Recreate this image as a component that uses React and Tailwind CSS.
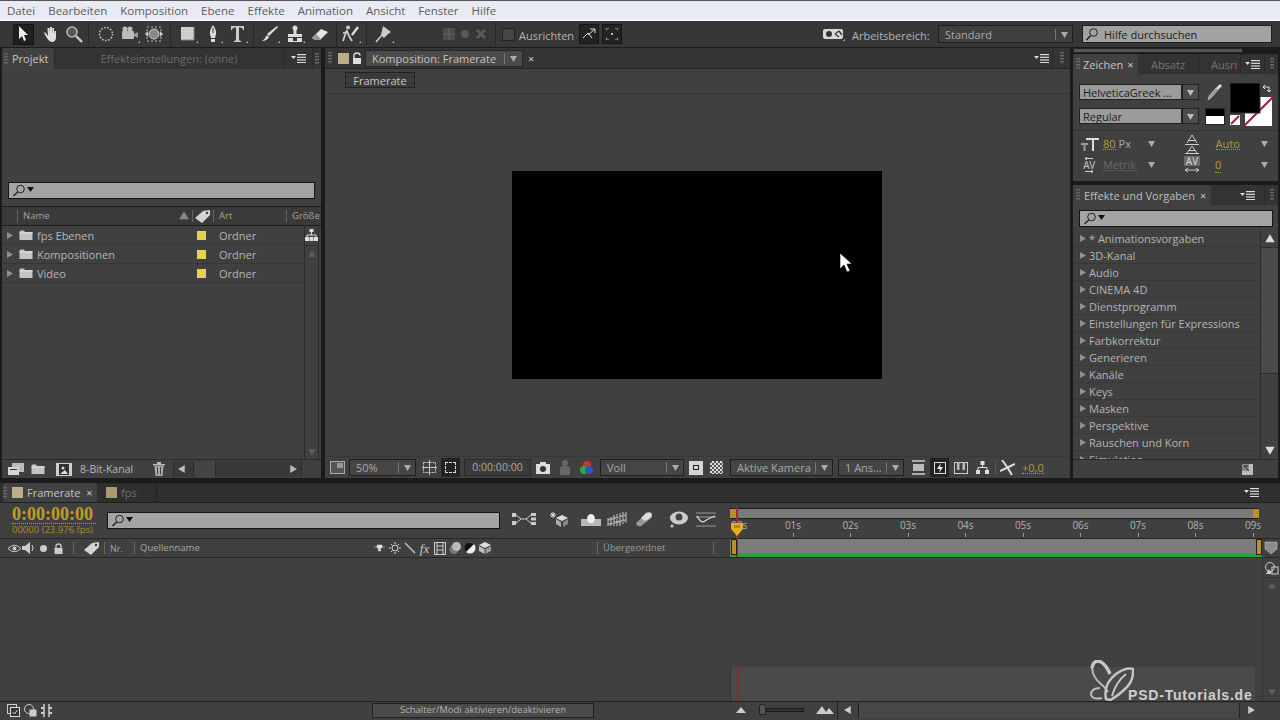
import React from "react";

const Tri = ({ d = "r", c = "#8f8f8f", s = 9, className = "" }) => {
  const p = { r: "2,1 8,4.5 2,8", l: "7,1 1,4.5 7,8", u: "1,7 4.5,1 8,7", d: "1,2 8,2 4.5,8" }[d];
  return <svg width={s} height={s} viewBox="0 0 9 9" className={"shrink-0 " + className}><polygon points={p} fill={c} /></svg>;
};
const Grip = ({ className = "" }) => (
  <svg width="4" height="12" viewBox="0 0 4 12" className={"shrink-0 " + className}>
    {[0, 3, 6, 9].map((y) => <rect key={y} x="0" y={y} width="4" height="1.5" fill="#666" />)}
  </svg>
);
const Menu = ({ className = "" }) => (
  <svg width="15" height="9" viewBox="0 0 15 9" className={"shrink-0 " + className}>
    <polygon points="0,2 5,2 2.5,5" fill="#ddd" />
    {[0, 2.7, 5.4, 8].map((y) => <rect key={y} x="6" y={y} width="9" height="1.2" fill="#ddd" />)}
  </svg>
);
const X = ({ className = "" }) => <span className={"text-[11px] leading-none text-[#ccc] " + className}>×</span>;
const Mark = () => <polygon points="18,19 20,19 20,17" fill="#bbb" />;
const Ic = ({ w = 20, h = 20, className = "", children }) => (
  <svg width={w} height={h} viewBox={`0 0 ${w} ${h}`} className={"shrink-0 " + className}>{children}</svg>
);
const Search = () => (
  <svg width="24" height="13" viewBox="0 0 24 13" className="shrink-0">
    <circle cx="8.5" cy="5" r="3.8" fill="none" stroke="#222" strokeWidth="1" />
    <line x1="5.7" y1="8" x2="1.5" y2="12" stroke="#222" strokeWidth="1.4" />
    <polygon points="15,3 22,3 18.5,8" fill="#111" />
  </svg>
);
const Folder = () => (
  <svg width="14" height="11" viewBox="0 0 14 11" className="shrink-0">
    <path d="M0.5 1.5 L0.5 10 L13.5 10 L13.5 2 L6 2 L5 0.5 L1.5 0.5 Z" fill="#c4c4c4" />
    <rect x="0.5" y="2.5" width="13" height="1" fill="#e2e2e2" />
  </svg>
);
const Tag = ({ className = "" }) => (
  <svg width="18" height="15" viewBox="0 0 18 15" className={"shrink-0 " + className}>
    <polygon points="1,9 9,2 16,1 16,6 8,14" fill="#d4d4d4" />
    <circle cx="13" cy="4" r="1.2" fill="#3a3a3a" />
  </svg>
);
const VLine = ({ className = "" }) => <div className={"w-px h-[12px] bg-[#666] shrink-0 " + className} />;

const Select = ({ label, className = "", txt = "text-[#a8a8a8]" }) => (
  <div className={"flex items-center h-[17px] border border-[#1f1f1f] bg-[#454545] shrink-0 " + className}>
    <span className={"flex-1 pl-[6px] text-[11px] leading-[15px] whitespace-nowrap " + txt}>{label}</span>
    <div className="w-px h-[11px] bg-[#777]" />
    <div className="w-[16px] flex justify-center"><Tri d="d" c="#aaa" /></div>
  </div>
);

function Toolbar() {
  return (
    <div className="h-[26px] shrink-0 bg-[#373737] flex items-center relative">
      <div className="w-[89px] h-[24px] flex items-center gap-[5px] pl-[13px] border-r border-[#262626] shrink-0">
        <div className="w-[21px] h-[21px] bg-[#202020] border border-[#151515] flex items-center justify-center shrink-0">
          <svg width="11" height="16" viewBox="0 0 11 16"><polygon points="1,0 1,13 4,10 6,15 8,14 6,9 10,9" fill="#eee" /></svg>
        </div>
        <Ic><path d="M5 9 L8 14 Q10 18 14 18 Q17 17 17 13 L17 7 L15.500 7 L15 11 L15 4 L13.500 4 L13 10 L13 3 L11 3 L11 10 L10.500 4 L8.500 4 L9 12 L6 8 Z" fill="#e0e0e0" /></Ic>
        <Ic><circle cx="8" cy="8" r="5" fill="#555" stroke="#bbb" strokeWidth="1.5" /><line x1="12" y1="12" x2="18" y2="18" stroke="#ccc" strokeWidth="2.4" /></Ic>
      </div>
      <div className="w-[82px] h-[24px] flex items-center gap-[4px] pl-[7px] border-r border-[#262626] shrink-0">
        <Ic><circle cx="10" cy="10" r="6.500" fill="none" stroke="#bbb" strokeWidth="1.600" strokeDasharray="1.600 1.500" /></Ic>
        <Ic><rect x="2" y="7" width="12" height="8" rx="1" fill="#bbb" /><circle cx="5" cy="5" r="2.500" fill="#bbb" /><circle cx="10" cy="5" r="2.500" fill="#bbb" /><polygon points="14,10 18,8 18,14 14,12" fill="#999" /><Mark /></Ic>
        <Ic><rect x="3" y="3" width="14" height="14" fill="none" stroke="#bbb" strokeDasharray="2 2" /><circle cx="10" cy="10" r="5" fill="#888" stroke="#ccc" /><polygon points="1,10 4,7 4,13" fill="#ccc" /><polygon points="19,10 16,7 16,13" fill="#ccc" /></Ic>
      </div>
      <div className="w-[83px] h-[24px] flex items-center gap-[5px] pl-[7px] border-r border-[#262626] shrink-0">
        <Ic><rect x="3" y="3" width="13" height="13" fill="#cfcfcf" /><path d="M3 16 H16 V3" fill="none" stroke="#888" /><Mark /></Ic>
        <Ic><path d="M10 1 Q14 7 13 10 L12 14 H8 L7 10 Q6 7 10 1 Z" fill="#ddd" /><rect x="8" y="15" width="4" height="3" fill="#ddd" /><line x1="10" y1="4" x2="10" y2="9" stroke="#333" /><Mark /></Ic>
        <Ic><path d="M3 2 H16 V6 H15 Q15 3.500 12 3.500 H11 V15 Q11 17 13 17 V18 H6 V17 Q8 17 8 15 V3.500 H7 Q4 3.500 4 6 H3 Z" fill="#ccc" /><Mark /></Ic>
      </div>
      <div className="w-[83px] h-[24px] flex items-center gap-[5px] pl-[6px] border-r border-[#262626] shrink-0">
        <Ic><path d="M17 2 L18 3 L9 12 L7 10 Z" fill="#ddd" /><path d="M7 11 L9 13 Q7 17 2 17 Q5 15 7 11 Z" fill="#ddd" /><Mark /></Ic>
        <Ic><circle cx="10" cy="4" r="2.500" fill="#ddd" /><rect x="8.500" y="6" width="3" height="5" fill="#ddd" /><rect x="3" y="10" width="14" height="3" fill="#ddd" /><rect x="3" y="14" width="14" height="4" fill="#ddd" /><rect x="8" y="14" width="4" height="3" fill="#333" /><Mark /></Ic>
        <Ic><polygon points="2,14 11,5 18,8 10,16 5,16" fill="#e4e4e4" /><polygon points="2,14 6,10 11,15 10,16 5,16" fill="#999" /></Ic>
      </div>
      <div className="w-[30px] h-[24px] flex items-center pl-[4px] border-r border-[#262626] shrink-0">
        <Ic><circle cx="7" cy="3.500" r="2" fill="#ccc" /><path d="M6 6 L4 11 L2 17 M6 7 L8 12 L11 17 M6 8 L2 9" stroke="#ccc" strokeWidth="1.800" fill="none" /><path d="M17 3 L11 11" stroke="#ddd" strokeWidth="2.400" /><Mark /></Ic>
      </div>
      <div className="w-[129px] h-[24px] flex items-center pl-[7px] border-r border-[#262626] shrink-0">
        <Ic><polygon points="9,2 17,8 14,10 10,14 7,11" fill="#ccc" /><line x1="8" y1="11" x2="2" y2="18" stroke="#ccc" strokeWidth="1.500" /><Mark /></Ic>
        <Ic w={16} h={16} className="ml-[47px]"><rect x="2" y="2" width="12" height="12" fill="#4c4c4c" /><path d="M8 2 V14 M2 8 H14" stroke="#666" /></Ic>
        <Ic w={14} h={14} className="ml-[1px]"><circle cx="7" cy="7" r="4" fill="#5a5a5a" /></Ic>
        <Ic w={14} h={14} className="ml-[2px]"><path d="M3 3 L11 11 M11 3 L3 11" stroke="#5c5c5c" strokeWidth="2.500" /></Ic>
      </div>
      <div className="w-[13px] h-[13px] border border-[#222] bg-[#454545] ml-[6px] shrink-0" />
      <span className="ml-[4px] mt-[2px] w-[55px] text-[11px] leading-none text-[#b4b4b4] whitespace-nowrap">Ausrichten</span>
      <div className="ml-[5px] w-[20px] h-[20px] bg-[#232323] border border-[#161616] flex items-center justify-center shrink-0">
        <svg width="14" height="14" viewBox="0 0 14 14"><path d="M1 11 L6 6 L10 11 M8 2 L13 2 M13 2 L13 6 M6 8 L13 2" stroke="#ddd" fill="none" /></svg>
      </div>
      <div className="ml-[3px] w-[20px] h-[20px] bg-[#232323] border border-[#161616] flex items-center justify-center shrink-0">
        <svg width="12" height="12" viewBox="0 0 12 12"><path d="M0 3 V0 H3 M9 0 H12 V3 M12 9 V12 H9 M3 12 H0 V9" stroke="#bbb" fill="none" /><rect x="5" y="5" width="2" height="2" fill="#bbb" /></svg>
      </div>
      <div className="flex-1" />
      <svg width="24" height="15" viewBox="0 0 24 15" className="shrink-0">
        <rect x="1" y="2" width="20" height="10" rx="2" fill="#d8d8d8" />
        <circle cx="7" cy="7" r="3" fill="#333" /><path d="M13 7 L17 4 M17 4 L20 8 M13 7 L17 10" stroke="#333" strokeWidth="1.300" fill="none" />
        <polygon points="21,14 23,14 23,12" fill="#bbb" />
      </svg>
      <span className="ml-[6px] mt-[2px] text-[11px] leading-none text-[#b4b4b4] whitespace-nowrap w-[86px]">Arbeitsbereich:</span>
      <Select label="Standard" className="w-[135px] !h-[18px] !bg-[#3f3f3f]" />
      <div className="ml-[9px] mr-[8px] w-[190px] h-[18px] border border-[#1c1c1c] bg-[#a2a2a2] flex items-center shrink-0">
        <svg width="14" height="14" viewBox="0 0 14 14" className="ml-[2px]"><circle cx="8.500" cy="5.500" r="3.800" fill="none" stroke="#222" /><line x1="5.700" y1="8.500" x2="1.500" y2="13" stroke="#222" strokeWidth="1.400" /></svg>
        <span className="ml-[5px] text-[11px] leading-none text-[#1d1d1d]">Hilfe durchsuchen</span>
      </div>
    </div>
  );
}

function ProjectPanel() {
  const rows = ["fps Ebenen", "Kompositionen", "Video"];
  return (
    <div className="w-[319px] ml-[2px] mr-[4px] shrink-0 flex flex-col">
      <div className="h-[21px] flex items-stretch shrink-0 bg-[#2a2a2a]">
        <div className="w-[52px] bg-[#414141] flex items-center pl-[2px] shrink-0 rounded-t-[2px]">
          <Grip /><span className="ml-[4px] text-[11px] leading-none text-[#c4c4c4]">Projekt</span><X className="ml-[6px]" />
        </div>
        <div className="w-[228px] ml-[1px] bg-[#333] flex items-center justify-center text-[11px] leading-none text-[#6d6d6d] shrink-0">Effekteinstellungen: (ohne)</div>
        <div className="w-[29px] bg-[#333] border-l border-[#2a2a2a] flex items-center justify-center"><Menu /></div>
        <div className="flex-1 flex items-center justify-center bg-[#333] border-l border-[#2a2a2a]"><Grip /></div>
      </div>
      <div className="flex-1 min-h-0 bg-[#404040] flex flex-col">
        <div className="h-[130px] shrink-0 flex flex-col justify-end px-[6px]">
          <div className="h-[17px] border border-[#141414] bg-[#a4a4a4] flex items-center pl-[3px]"><Search /></div>
        </div>
        <div className="h-[8px] shrink-0 border-b border-[#1c1c1c]" />
        <div className="h-[19px] shrink-0 bg-[#3a3a3a] border-b border-[#1c1c1c] flex items-center text-[9.500px] leading-none text-[#a4a4a4]">
          <VLine className="ml-[15px]" /><span className="ml-[5px] w-[155px]">Name</span>
          <Tri d="u" c="#888" s={12} /><VLine className="ml-[2px]" /><Tag className="ml-[1px]" /><VLine className="ml-[1px]" />
          <span className="ml-[5px] w-[67px]">Art</span><VLine /><span className="ml-[5px]">Größe</span>
        </div>
        <div className="flex-1 min-h-0 flex">
          <div className="w-[302px] shrink-0">
            {rows.map((r) => (
              <div key={r} className="h-[19px] border-b border-[#363636] flex items-center text-[11px] leading-none text-[#b5b5b5]">
                <Tri className="ml-[3px]" /><div className="ml-[5px] flex"><Folder /></div>
                <span className="ml-[4px] w-[160px] shrink-0">{r}</span>
                <div className="w-[9px] h-[9px] bg-[#e3d44c] mr-[13px] shrink-0" /><span>Ordner</span>
              </div>
            ))}
          </div>
          <div className="w-[15px] border-x border-[#2c2c2c] flex flex-col items-center relative">
            <div className="h-[19px] flex items-center">
              <svg width="13" height="13" viewBox="0 0 13 13"><rect x="4.500" y="0" width="4" height="3" fill="#ddd" /><path d="M6.500 3 V6 M2 8 V6 H11 V8" stroke="#ddd" fill="none" /><rect x="0" y="8" width="4" height="4" fill="#ddd" /><rect x="4.500" y="8" width="4" height="4" fill="#ddd" /><rect x="9" y="8" width="4" height="4" fill="#ddd" /></svg>
            </div>
            <div className="w-full flex-1 border-t border-[#2c2c2c] flex flex-col items-center justify-between pt-[3px] pb-[2px]">
              <Tri d="u" c="#5d5d5d" s={10} /><Tri d="d" c="#5d5d5d" s={10} />
            </div>
          </div>
        </div>
        <div className="h-[19px] shrink-0 flex items-center border-t border-[#2c2c2c]">
          <svg width="16" height="13" viewBox="0 0 16 13" className="ml-[6px]"><rect x="4" y="0" width="12" height="9" fill="#bbb" /><rect x="0" y="4" width="11" height="8" fill="#d5d5d5" /><rect x="2" y="6" width="7" height="1" fill="#333" /></svg>
          <div className="ml-[7px] flex"><Folder /></div>
          <svg width="16" height="13" viewBox="0 0 16 13" className="ml-[11px]"><rect x="0" y="0" width="16" height="13" fill="#cfcfcf" /><rect x="3" y="1" width="10" height="11" fill="#303030" /><circle cx="7" cy="5" r="1.500" fill="#ddd" /><polygon points="4,11 9,7 12,11" fill="#ddd" /></svg>
          <span className="ml-[8px] text-[10.500px] leading-none text-[#b8b8b8] w-[71px] whitespace-nowrap">8-Bit-Kanal</span>
          <svg width="12" height="14" viewBox="0 0 12 14" className="ml-[2px]"><rect x="0" y="2" width="12" height="1.500" fill="#bbb" /><rect x="4" y="0" width="4" height="2" fill="#bbb" /><path d="M1.500 4 H10.500 L9.500 14 H2.500 Z" fill="#aaa" /><path d="M4.500 5 V12.500 M7.500 5 V12.500" stroke="#444" /></svg>
          <div className="ml-[8px] w-[129px] h-[16px] flex items-center border-x border-[#2c2c2c] bg-[#393939]">
            <Tri d="l" c="#bbb" s={10} className="ml-[3px]" />
            <div className="ml-[6px] w-[23px] h-[16px] bg-[#444] border-x border-[#2a2a2a]" />
            <div className="flex-1" /><Tri d="r" c="#bbb" s={10} className="mr-[3px]" />
          </div>
        </div>
      </div>
    </div>
  );
}

function CompPanel() {
  return (
    <div className="w-[745px] shrink-0 flex flex-col">
      <div className="h-[21px] shrink-0 bg-[#343434] flex items-center border-b border-[#262626]">
        <Grip className="ml-[3px]" />
        <div className="ml-[6px] w-[11px] h-[11px] bg-[#bcae86] shrink-0" />
        <svg width="10" height="12" viewBox="0 0 10 12" className="ml-[3px]"><path d="M2 6 V3.500 Q2 1 5 1 Q8 1 8 3.500" fill="none" stroke="#ddd" strokeWidth="1.400" /><rect x="1" y="6" width="8" height="6" fill="#ddd" /></svg>
        <div className="ml-[3px] w-[158px] h-[17px] border border-[#262626] bg-[#4a4a4a] flex items-center">
          <span className="pl-[6px] flex-1 text-[11px] leading-none text-[#c2c2c2] whitespace-nowrap">Komposition: Framerate</span>
          <div className="w-px h-[11px] bg-[#777]" /><div className="w-[17px] flex justify-center"><Tri d="d" c="#aaa" /></div>
        </div>
        <X className="ml-[5px]" />
        <div className="flex-1" />
        <Menu className="mr-[3px]" />
        <div className="h-full border-l border-[#2a2a2a] w-[18px] flex items-center justify-center"><Grip /></div>
      </div>
      <div className="flex-1 min-h-0 bg-[#404040] flex flex-col">
        <div className="h-[25px] shrink-0 border-b border-[#333] flex items-start pt-[3px] pl-[20px]">
          <div className="w-[70px] h-[16px] border border-[#222] bg-[#3a3a3a] flex items-center justify-center text-[11px] leading-none text-[#c6c6c6]">Framerate</div>
        </div>
        <div className="flex-1 min-h-0 flex items-center justify-center relative pr-[1px]">
          <div className="w-[370px] h-[208px] bg-black mt-[-1px]" />
          <svg width="14" height="20" viewBox="0 0 14 20" className="absolute left-[514px] top-[159px]"><polygon points="1,0 1,16 5,12 8,19 11,18 8,11 13,11" fill="#fff" stroke="#000" strokeWidth="0.600" /></svg>
        </div>
        <div className="h-[22px] shrink-0 flex items-center border-t border-[#383838]">
          <svg width="15" height="13" viewBox="0 0 15 13" className="ml-[5px]"><rect x="0.500" y="0.500" width="14" height="12" fill="#555" stroke="#aaa" /><rect x="7" y="2" width="6" height="5" fill="#999" /></svg>
          <Select label="50%" className="ml-[4px] w-[67px]" />
          <svg width="15" height="15" viewBox="0 0 15 15" className="ml-[6px]"><rect x="1.500" y="2.500" width="12" height="10" fill="none" stroke="#ccc" strokeDasharray="2 1" /><path d="M7.500 0 V15 M0 7.500 H15" stroke="#ccc" /></svg>
          <div className="ml-[4px] w-[19px] h-[19px] bg-[#232323] flex items-center justify-center shrink-0"><div className="w-[11px] h-[11px] border border-dashed border-[#ddd]" /></div>
          <div className="ml-[4px] w-[67px] h-[17px] border border-[#2a2a2a] bg-[#3b3b3b] text-[10.500px] leading-none text-[#a8a8a8] flex items-center justify-center shrink-0">0:00:00:00</div>
          <svg width="14" height="12" viewBox="0 0 14 12" className="ml-[5px]"><rect x="0" y="2" width="14" height="10" fill="#ddd" /><rect x="4" y="0" width="6" height="3" fill="#ddd" /><circle cx="7" cy="7" r="3" fill="#333" /></svg>
          <svg width="10" height="15" viewBox="0 0 10 15" className="ml-[10px]"><circle cx="5" cy="3" r="3" fill="#666" /><path d="M0 15 V8 Q0 6 3 6 H7 Q10 6 10 8 V15 Z" fill="#666" /></svg>
          <svg width="16" height="16" viewBox="0 0 16 16" className="ml-[9px]"><circle cx="8" cy="5" r="4" fill="#c33" /><circle cx="5" cy="10" r="4" fill="#3a3" /><circle cx="10" cy="10" r="4" fill="#35b" /></svg>
          <Select label="Voll" className="ml-[5px] w-[84px]" />
          <div className="ml-[5px] w-[14px] h-[14px] bg-[#d4d4d4] flex items-center justify-center shrink-0"><div className="w-[6px] h-[5px] border border-[#222]" /></div>
          <div className="ml-[7px] w-[13px] h-[13px] shrink-0 bg-[repeating-conic-gradient(#ddd_0_25%,#555_0_50%)] bg-[length:4px_4px]" />
          <Select label="Aktive Kamera" className="ml-[7px] w-[103px]" />
          <Select label="1 Ans..." className="ml-[5px] w-[66px]" />
          <svg width="13" height="15" viewBox="0 0 13 15" className="ml-[8px]"><path d="M0 1 H13 M0 14 H13" stroke="#ccc" strokeWidth="1.500" /><rect x="1" y="4" width="11" height="7" fill="#bbb" /></svg>
          <div className="ml-[5px] w-[19px] h-[19px] bg-[#222] flex items-center justify-center shrink-0">
            <svg width="12" height="12" viewBox="0 0 12 12"><rect x="0.500" y="0.500" width="11" height="11" fill="none" stroke="#ddd" /><polygon points="7,1 3,7 6,7 5,11 9,5 6,5" fill="#eee" /></svg>
          </div>
          <svg width="14" height="13" viewBox="0 0 14 13" className="ml-[5px]"><rect x="0.500" y="1.500" width="13" height="11" fill="none" stroke="#ccc" /><rect x="3" y="1" width="2.500" height="8" fill="#bbb" /><rect x="8.500" y="1" width="2.500" height="8" fill="#bbb" /></svg>
          <svg width="13" height="13" viewBox="0 0 13 13" className="ml-[8px]"><rect x="4.500" y="0" width="4" height="4" fill="#ddd" /><path d="M6.500 4 V6.500 M2 9 V6.500 H11 V9" stroke="#ddd" fill="none" /><rect x="0" y="9" width="4" height="4" fill="#ddd" /><rect x="9" y="9" width="4" height="4" fill="#ddd" /></svg>
          <div className="ml-[6px] w-px h-[16px] bg-[#555]" />
          <svg width="15" height="15" viewBox="0 0 15 15" className="ml-[4px]"><path d="M7.500 7.500 L2 0 M7.500 7.500 L15 4 M7.500 7.500 L12 15 M7.500 7.500 L0 11" stroke="#ddd" strokeWidth="2" /></svg>
          <span className="ml-[7px] text-[11px] leading-none text-[#b59a3a] border-b border-dotted border-[#b59a3a] whitespace-nowrap">+0,0</span>
        </div>
      </div>
    </div>
  );
}

const Field = ({ children, className = "" }) => <span className={"text-[11px] leading-none border-b border-dotted " + className}>{children}</span>;

function RightPanels() {
  const fx = ["* Animationsvorgaben", "3D-Kanal", "Audio", "CINEMA 4D", "Dienstprogramm", "Einstellungen für Expressions", "Farbkorrektur", "Generieren", "Kanäle", "Keys", "Masken", "Perspektive", "Rauschen und Korn", "Simulation"];
  return (
    <div className="w-[205px] ml-[3px] shrink-0 flex flex-col">
      <div className="h-[5px] w-[170px] bg-[#555] border border-[#222] shrink-0" />
      <div className="h-[20px] shrink-0 flex items-stretch mt-[1px] bg-[#333]">
        <div className="w-[65px] bg-[#414141] flex items-center pl-[3px] rounded-t-[2px] shrink-0">
          <Grip /><span className="ml-[3px] text-[11px] leading-none text-[#c4c4c4]">Zeichen</span><X className="ml-[4px]" />
        </div>
        <div className="w-[61px] border-r border-[#262626] flex items-center justify-center text-[11px] leading-none text-[#757575] shrink-0">Absatz</div>
        <div className="w-[41px] flex items-center pl-[12px] text-[11px] leading-none text-[#757575] overflow-hidden shrink-0">Ausri</div>
        <div className="w-[24px] flex items-center justify-center border-l border-[#2a2a2a]"><Menu /></div>
        <div className="flex-1 flex items-center justify-center border-l border-[#2a2a2a]"><Grip /></div>
      </div>
      <div className="h-[107px] shrink-0 bg-[#404040] flex flex-col relative">
        <div className="h-[57px] shrink-0 border-b border-[#333] pt-[9px] pl-[6px] relative">
          <div className="flex items-center">
            <div className="w-[103px] h-[16px] border border-[#222] bg-[#9b9b9b] text-[11px] leading-none text-[#1e1e1e] flex items-center pl-[3px] whitespace-nowrap">HelveticaGreek ...</div>
            <div className="w-[17px] h-[16px] border border-[#222] bg-[#4c4c4c] flex items-center justify-center"><Tri d="d" c="#bbb" /></div>
            <svg width="16" height="18" viewBox="0 0 16 18" className="ml-[8px]"><path d="M13 1 L15 3 L11 7 L9 5 Z" fill="#ddd" /><path d="M9 5 L11 7 L4 15 L1 17 L2 13 Z" fill="#999" stroke="#ddd" strokeWidth="0.500" /></svg>
          </div>
          <div className="flex items-center mt-[7px]">
            <div className="w-[103px] h-[16px] border border-[#222] bg-[#9b9b9b] text-[11px] leading-none text-[#1e1e1e] flex items-center pl-[3px]">Regular</div>
            <div className="w-[17px] h-[16px] border border-[#222] bg-[#4c4c4c] flex items-center justify-center"><Tri d="d" c="#bbb" /></div>
          </div>
          <div className="absolute left-[132px] top-[34px] w-[20px] h-[17px] border border-[#222] flex flex-col"><div className="h-[7px] bg-black" /><div className="flex-1 bg-white" /></div>
          <svg width="10" height="10" viewBox="0 0 10 10" className="absolute left-[157px] top-[41px]"><rect width="10" height="10" fill="#fff" /><line x1="1" y1="9" x2="9" y2="1" stroke="#a01c3c" strokeWidth="2" /></svg>
          <svg width="43" height="43" viewBox="0 0 43 43" className="absolute left-[157px] top-[9px]">
            <rect x="15" y="14" width="27" height="29" fill="#fff" />
            <line x1="14" y1="43" x2="43" y2="14" stroke="#a01c3c" strokeWidth="2" />
            <rect x="0" y="0" width="30" height="30" fill="#000" stroke="#333" />
            <path d="M33 4 H39 V9 M39 9 L37 7 M39 9 L41 7 M33 4 L35 2 M33 4 L35 6" stroke="#ddd" fill="none" />
          </svg>
        </div>
        <div className="flex-1 relative pt-[2px]">
          <div className="h-[21px] flex items-center">
            <svg width="20" height="16" viewBox="0 0 20 16" className="ml-[7px]"><path d="M6 2 H19 V4 H14 V15 H12 V4 H6 Z" fill="#ddd" /><path d="M1 7 H8 V9 H5.500 V15 H3.500 V9 H1 Z" fill="#999" /></svg>
            <Field className="ml-[3px] text-[#b59a3a] border-[#b59a3a]">80</Field>
            <span className="ml-[3px] text-[11px] leading-none text-[#aaa] w-[24px]">Px</span>
            <Tri d="d" c="#aaa" className="ml-[4px]" />
            <svg width="14" height="20" viewBox="0 0 14 20" className="ml-[29px]"><path d="M7 1 L2 9 M7 1 L12 9 M4 6.500 H10" stroke="#ccc" fill="none" /><line x1="0" y1="10.500" x2="14" y2="10.500" stroke="#ccc" /><path d="M7 12 L2 19 M7 12 L12 19 M4 16.500 H10" stroke="#ccc" fill="none" /><line x1="0" y1="19.500" x2="14" y2="19.500" stroke="#ccc" /></svg>
            <Field className="ml-[17px] w-[24px] text-[#b59a3a] border-[#b59a3a]">Auto</Field>
            <Tri d="d" c="#aaa" className="ml-[20px]" />
          </div>
          <div className="h-[21px] flex items-center">
            <div className="ml-[7px] w-[18px] h-[18px] flex flex-col items-center justify-center shrink-0">
              <svg width="10" height="3" viewBox="0 0 10 3"><path d="M1 1.500 H9 M1 1.500 L3 0 M1 1.500 L3 3" stroke="#ccc" fill="none" /></svg>
              <span className="text-[10px] leading-[10px] text-[#ccc] tracking-[-0.5px]">AV</span>
              <svg width="10" height="3" viewBox="0 0 10 3"><path d="M1 1.500 H9 M9 1.500 L7 0 M9 1.500 L7 3" stroke="#ccc" fill="none" /></svg>
            </div>
            <Field className="ml-[5px] w-[34px] text-[#666] border-[#666]">Metrik</Field>
            <Tri d="d" c="#aaa" className="ml-[10px]" />
            <div className="ml-[28px] w-[16px] flex flex-col items-center shrink-0">
              <span className="w-full bg-[#6a6a6a] text-center text-[10px] leading-[10px] text-[#ddd]">AV</span>
              <svg width="14" height="6" viewBox="0 0 14 6" className="mt-[1px]"><path d="M0 3 H14 M0 3 L3 1 M0 3 L3 5 M14 3 L11 1 M14 3 L11 5" stroke="#ccc" fill="none" /></svg>
            </div>
            <Field className="ml-[15px] w-[25px] !border-transparent text-[#b59a3a]"><span className="border-b border-dotted border-[#b59a3a]">0</span></Field>
            <Tri d="d" c="#aaa" className="ml-[20px]" />
          </div>
        </div>
      </div>
      <div className="h-[4px] shrink-0" />
      <div className="h-[20px] shrink-0 flex items-stretch bg-[#333]">
        <div className="w-[138px] bg-[#414141] flex items-center pl-[3px] rounded-t-[2px] shrink-0">
          <Grip /><span className="ml-[4px] text-[11px] leading-none text-[#bdbdbd] whitespace-nowrap">Effekte und Vorgaben</span><X className="ml-[5px]" />
        </div>
        <div className="flex-1" />
        <Menu className="mr-[9px] self-center" />
        <div className="w-[14px] flex items-center justify-center border-l border-[#2a2a2a]"><Grip /></div>
      </div>
      <div className="flex-1 min-h-0 bg-[#404040] flex flex-col">
        <div className="h-[25px] shrink-0 pt-[5px] pl-[6px]">
          <div className="w-[194px] h-[17px] border border-[#141414] bg-[#a4a4a4] flex items-center pl-[3px]"><Search /></div>
        </div>
        <div className="flex-1 min-h-0 flex">
          <div className="w-[188px] shrink-0 overflow-hidden border-r border-[#2c2c2c]">
            {fx.map((f) => (
              <div key={f} className="h-[17px] border-b border-[#383838] flex items-center text-[11px] leading-none text-[#b5b5b5] whitespace-nowrap">
                <Tri className="ml-[5px]" /><span className="ml-[2px]">{f}</span>
              </div>
            ))}
          </div>
          <div className="flex-1 flex flex-col items-center justify-between py-[3px]">
            <Tri d="u" c="#ddd" s={12} />
            <div className="w-full h-[127px] bg-[#4a4a4a] border-y border-[#2c2c2c] mt-[2px]" />
            <div className="flex-1" />
            <Tri d="d" c="#ddd" s={12} />
          </div>
        </div>
        <div className="h-[19px] shrink-0 flex items-center justify-end border-t border-[#2a2a2a] pr-[25px]">
          <svg width="11" height="11" viewBox="0 0 11 11"><rect width="11" height="11" fill="#bbb" /><rect x="0" y="0" width="7" height="7" fill="#888" /><path d="M2 2 L7 7 M2 2 H6" stroke="#222" /></svg>
        </div>
      </div>
    </div>
  );
}

const Slot = ({ children }) => <div className="w-[15px] flex justify-center items-center shrink-0">{children}</div>;

function Timeline() {
  const secs = ["01s", "02s", "03s", "04s", "05s", "06s", "07s", "08s", "09s"];
  return (
    <div className="flex-1 min-h-0 flex flex-col relative">
      <div className="h-[20px] shrink-0 flex items-stretch bg-[#2f2f2f] border-b border-[#1f1f1f]">
        <div className="w-[94px] ml-[3px] bg-[#414141] flex items-center rounded-t-[2px] shrink-0">
          <Grip /><div className="ml-[5px] w-[11px] h-[11px] bg-[#bcae86] shrink-0" />
          <span className="ml-[4px] text-[11px] leading-none text-[#c4c4c4]">Framerate</span><X className="ml-[6px]" />
        </div>
        <div className="w-[60px] border-r border-[#222] flex items-center pl-[9px] shrink-0">
          <div className="w-[11px] h-[11px] bg-[#a89a75] shrink-0" /><span className="ml-[4px] text-[11px] leading-none text-[#6d6d6d]">fps</span>
        </div>
        <div className="flex-1" />
        <Menu className="mr-[21px] self-center" />
      </div>
      <div className="flex-1 min-h-0 bg-[#404040] flex flex-col">
        <div className="h-[36px] shrink-0 flex border-b border-[#262626]">
          <div className="w-[107px] shrink-0 pl-[12px] pt-[3px]">
            <div className="w-[84px] font-['Liberation_Serif',serif] font-bold text-[18px] leading-[17px] text-[#c49a26] border-b border-dotted border-[#b59a3a] whitespace-nowrap">0:00:00:00</div>
            <div className="mt-[1px] text-[9.500px] leading-none text-[#a88a2e] whitespace-nowrap">00000 (23.976 fps)</div>
          </div>
          <div className="w-[393px] h-[17px] mt-[9px] border border-[#141414] bg-[#a4a4a4] flex items-center pl-[3px] shrink-0"><Search /></div>
          <div className="flex items-center mt-[6px] h-[20px] shrink-0">
            <svg width="26" height="16" viewBox="0 0 26 16" className="ml-[12px]"><rect x="0" y="2" width="4" height="4" fill="#ccc" /><rect x="0" y="10" width="4" height="4" fill="#ccc" /><path d="M4 4 L9 8 L4 12 M9 8 H14 L19 4 M14 8 L19 12" stroke="#ccc" fill="none" /><rect x="19" y="2" width="5" height="3" fill="#ccc" /><rect x="19" y="6.500" width="5" height="3" fill="#ccc" /><rect x="19" y="11" width="5" height="3" fill="#ccc" /></svg>
            <svg width="20" height="16" viewBox="0 0 20 16" className="ml-[11px]"><path d="M4 1 V7 M1 4 H7 M2 2 L6 6 M6 2 L2 6" stroke="#ddd" /><polygon points="13,4 19,7 13,10 7,7" fill="#ddd" /><polygon points="7,8 12,11 12,16 7,13" fill="#aaa" /><polygon points="19,8 14,11 14,16 19,13" fill="#888" /></svg>
            <svg width="20" height="15" viewBox="0 0 20 15" className="ml-[12px]"><rect x="0" y="7" width="20" height="7" fill="#b9b9b9" /><path d="M6 8 Q6 2 10 2 Q14 2 14 8 L12 11 H8 Z" fill="#eee" /></svg>
            <svg width="20" height="16" viewBox="0 0 20 16" className="ml-[6px]"><path d="M1 7 V15 M4 6 V15 M7 4 V15 M10 3 V15 M13 2 V15 M16 1 V13 M19 1 V12 M1 9 L19 4 M1 13 L19 9" stroke="#aaa" strokeWidth="1.300" /></svg>
            <svg width="18" height="16" viewBox="0 0 18 16" className="ml-[8px]"><path d="M1 12 L11 3 Q14 1 16 3 Q18 6 15 8 L6 15 Q2 16 1 12 Z" fill="#999" /><path d="M6 7 L11 2 Q15 0 17 3 Q17 6 15 7 L10 10 Z" fill="#ddd" /></svg>
            <svg width="20" height="17" viewBox="0 0 20 17" className="ml-[16px]"><ellipse cx="10" cy="7" rx="9" ry="6.500" fill="#ccc" /><circle cx="10" cy="6" r="3.500" fill="#444" /><circle cx="3" cy="15" r="1.500" fill="#ccc" /></svg>
            <svg width="20" height="15" viewBox="0 0 20 15" className="ml-[7px]"><path d="M0 1 H20 M0 14 H20 M0 5 H20" stroke="#999" /><path d="M1 4 Q5 12 9 9 T19 4" stroke="#ddd" fill="none" strokeWidth="1.300" /></svg>
          </div>
          <div className="w-[530px] ml-[14px] shrink-0 flex flex-col relative">
            <div className="mt-[5px] h-[11px] w-[529px] bg-[#7a7a7a] border-y border-[#1f1f1f] flex justify-between shrink-0">
              <div className="w-[6px] h-full bg-[#b8912a]" /><div className="w-[6px] h-full bg-[#b8912a]" />
            </div>
            <div className="h-[20px] flex text-[10px] leading-none text-[#b2b2b2]">
              <div className="w-[34.250px] shrink-0 pt-[1px] pl-[1px]">00s</div>
              {secs.map((s) => (
                <div key={s} className="w-[57.500px] shrink-0 flex flex-col items-center pt-[1px]">
                  <span>{s}</span><div className="w-px h-[4px] mt-[3px] bg-[#999]" />
                </div>
              ))}
            </div>
          </div>
        </div>
        <div className="h-[19px] shrink-0 flex items-center border-b border-[#262626] relative">
          <svg width="13" height="9" viewBox="0 0 13 9" className="ml-[8px]"><path d="M0 4.500 Q6.500 -2 13 4.500 Q6.500 11 0 4.500 Z" fill="none" stroke="#ccc" /><circle cx="6.500" cy="4.500" r="2" fill="#ccc" /></svg>
          <svg width="13" height="12" viewBox="0 0 13 12" className="ml-[1px]"><polygon points="0,4 3,4 8,0 8,12 3,8 0,8" fill="#ccc" /><path d="M10 3 Q12 6 10 9" stroke="#ccc" fill="none" /></svg>
          <div className="ml-[5px] w-[7px] h-[7px] rounded-full bg-[#ccc]" />
          <svg width="9" height="11" viewBox="0 0 9 11" className="ml-[7px]"><path d="M2 5 V3 Q2 1 4.500 1 Q7 1 7 3 V5" stroke="#ccc" fill="none" strokeWidth="1.300" /><rect x="0.500" y="5" width="8" height="6" fill="#ccc" /></svg>
          <VLine className="ml-[10px]" />
          <Tag className="ml-[9px]" />
          <VLine className="ml-[3px]" />
          <span className="ml-[5px] w-[24px] text-[9px] leading-none text-[#a4a4a4]">Nr.</span>
          <VLine />
          <span className="ml-[5px] w-[232px] text-[9.500px] leading-none text-[#a4a4a4]">Quellenname</span>
          <div className="flex items-center w-[225px] shrink-0">
            <Slot><svg width="11" height="8" viewBox="0 0 11 8"><path d="M0 3 H3 M8 3 H11 M3 1 H8 V4 H6.500 V7 H4.500 V4 H3 Z" fill="#ddd" stroke="#ddd" strokeWidth="0.500" /></svg></Slot>
            <Slot><svg width="12" height="12" viewBox="0 0 12 12"><circle cx="6" cy="6" r="3" fill="none" stroke="#ccc" /><path d="M6 0 V2 M6 10 V12 M0 6 H2 M10 6 H12 M2 2 L3.500 3.500 M10 2 L8.500 3.500 M2 10 L3.500 8.500 M10 10 L8.500 8.500" stroke="#ccc" /></svg></Slot>
            <Slot><svg width="12" height="12" viewBox="0 0 12 12"><path d="M1 1 L11 11" stroke="#ccc" strokeWidth="1.200" /></svg></Slot>
            <Slot><span className="font-['Liberation_Serif',serif] italic text-[13px] leading-none text-[#ccc]">fx</span></Slot>
            <Slot><svg width="12" height="13" viewBox="0 0 12 13"><rect x="0.500" y="0.500" width="11" height="12" fill="none" stroke="#ccc" /><path d="M3 0 V13 M9 0 V13 M3 4 H9 M3 8 H9" stroke="#ccc" /></svg></Slot>
            <Slot><svg width="12" height="12" viewBox="0 0 12 12"><circle cx="5" cy="7.500" r="4.500" fill="#777" /><circle cx="7.500" cy="4.500" r="4.500" fill="#bbb" /></svg></Slot>
            <Slot><svg width="12" height="12" viewBox="0 0 12 12"><circle cx="6" cy="6" r="5.500" fill="#eee" /><path d="M6 0.500 A5.500 5.500 0 0 0 2 10 L10 2 A5.500 5.500 0 0 0 6 0.500 Z" fill="#111" /></svg></Slot>
            <Slot><svg width="12" height="12" viewBox="0 0 12 12"><polygon points="6,0 12,3 6,6 0,3" fill="#ddd" /><polygon points="0,4 5.500,7 5.500,12 0,9" fill="#bbb" /><polygon points="12,4 6.500,7 6.500,12 12,9" fill="#999" /></svg></Slot>
          </div>
          <VLine />
          <span className="ml-[5px] w-[110px] text-[9.500px] leading-none text-[#9a9a9a]">Übergeordnet</span>
          <VLine />
          <div className="ml-[16px] w-[532px] self-stretch bg-[#7c7c7c] border-b-[4px] border-[#2aa23a] shrink-0" />
          <div className="flex-1 flex justify-center">
            <svg width="14" height="14" viewBox="0 0 14 14"><polygon points="1,1 13,1 13,8 7,13 1,8" fill="#8c8c8c" stroke="#ccc" strokeWidth="0.500" /></svg>
          </div>
        </div>
        <div className="flex-1 min-h-0 flex">
          <div className="w-[730px] shrink-0" />
          <div className="flex-1 flex flex-col justify-end"><div className="h-[34px] w-[525px] bg-[#4a4a4a] border-l border-[#333] relative"><div className="absolute left-[6px] top-0 bottom-0 w-[2px] bg-[#8a2a2a]" /></div></div>
          <div className="w-[18px] shrink-0 border-l border-[#333] flex flex-col items-center">
            <svg width="14" height="14" viewBox="0 0 14 14" className="mt-[3px]"><circle cx="5" cy="6" r="4.500" fill="none" stroke="#ccc" /><rect x="7" y="6" width="6" height="7" fill="none" stroke="#ccc" /><polygon points="4,8 7,13 1,13" fill="#ccc" /></svg>
            <div className="w-full flex-1 border-t border-[#333] mt-[2px] flex flex-col items-center justify-between pt-[3px] pb-[4px]"><Tri d="u" c="#5d5d5d" s={10} /><Tri d="d" c="#5d5d5d" s={10} /></div>
          </div>
        </div>
        <div className="h-[17px] shrink-0 border-t border-[#222] flex items-center mb-[2px]">
          <div className="ml-[7px] w-[45px] shrink-0 flex items-center gap-[4px]">
            <svg width="13" height="13" viewBox="0 0 13 13"><rect x="0.500" y="0.500" width="9" height="9" fill="none" stroke="#ccc" /><rect x="3.500" y="3.500" width="9" height="9" fill="#333" stroke="#ddd" /><path d="M5.500 8 L7.500 10 L10.500 6" stroke="#ddd" fill="none" /></svg>
            <svg width="13" height="13" viewBox="0 0 13 13"><circle cx="5" cy="5" r="4.500" fill="none" stroke="#ccc" /><rect x="5.500" y="5.500" width="7" height="7" fill="#ccc" /></svg>
            <svg width="11" height="13" viewBox="0 0 11 13"><path d="M3 0 V13 M8 0 V13" stroke="#ccc" strokeWidth="1.500" /><path d="M0 4 H3 M8 4 H11 M0 9 H3 M8 9 H11" stroke="#ccc" strokeWidth="2" /></svg>
          </div>
          <div className="ml-[320px] w-[222px] h-[15px] border border-[#222] bg-[#4a4a4a] flex items-center justify-center text-[9.500px] leading-none text-[#b0b0b0] whitespace-nowrap shrink-0">Schalter/Modi aktivieren/deaktivieren</div>
          <svg width="10" height="6" viewBox="0 0 10 6" className="ml-[142px] shrink-0"><polygon points="0,6 5,0 10,6" fill="#ccc" /></svg>
          <div className="ml-[18px] w-[40px] h-[4px] bg-[#333] border border-[#1c1c1c] relative shrink-0">
            <div className="absolute left-[-6px] top-[-5px] w-[7px] h-[11px] bg-[#555] border border-[#222] rounded-t-[3px]" />
          </div>
          <svg width="18" height="8" viewBox="0 0 18 8" className="ml-[12px] shrink-0"><polygon points="0,8 6,0 10,6 13,2 18,8" fill="#ccc" /></svg>
          <div className="ml-[3px] w-[21px] h-[17px] border-l border-[#222] flex items-center justify-center shrink-0"><Tri d="l" c="#ccc" s={10} /></div>
          <div className="w-[382px] h-[15px] border-x border-[#222] bg-[#474747] shrink-0" />
          <div className="w-[22px] flex justify-center shrink-0"><Tri d="r" c="#ccc" s={10} /></div>
        </div>
      </div>
      <div className="absolute left-[736px] top-[25px] w-[2px] h-[49px] bg-[#a82a2a]" />
      <svg width="14" height="14" viewBox="0 0 14 14" className="absolute left-[730px] top-[39px]"><path d="M1 1 H13 V7 L7 14 L1 7 Z" fill="#e0b020" /><path d="M5 3 V6 M7 3 V6 M9 3 V6" stroke="#7a5a10" /></svg>
      <div className="absolute left-[731px] top-[56px] w-[6px] h-[16px] bg-[#b8912a] border border-[#222]" />
      <div className="absolute left-[1256px] top-[56px] w-[6px] h-[16px] bg-[#b8912a] border border-[#222]" />
      <div className="absolute left-[1088px] top-[177px] flex items-end pointer-events-none">
        <svg width="46" height="41" viewBox="0 0 46 41" className="shrink-0">
          <path d="M4 8 Q5 1 11 1 Q18 4 22 14" fill="none" stroke="#c4c4c4" strokeWidth="3.500" />
          <path d="M4 8 Q5 18 13 24 Q18 28 20 32 M12 28 Q3 28 3 35 Q5 40 14 38" fill="none" stroke="#bbb" strokeWidth="2" />
          <path d="M18 39 Q15 24 28 14 Q38 7 45 9 Q46 20 38 28 Q30 36 22 40 Z" fill="none" stroke="#c4c4c4" strokeWidth="2.500" />
          <path d="M24 36 Q28 22 38 14" fill="none" stroke="#c4c4c4" strokeWidth="2" />
        </svg>
        <span className="ml-[-6px] mb-[-1px] font-['Liberation_Sans',sans-serif] font-bold text-[14px] leading-none tracking-[0.8px] text-[#cfcfcf] whitespace-nowrap">PSD-Tutorials.de</span>
      </div>
    </div>
  );
}

export default function App() {
  const menu = ["Datei", "Bearbeiten", "Komposition", "Ebene", "Effekte", "Animation", "Ansicht", "Fenster", "Hilfe"];
  return (
    <div className="w-[1280px] h-[720px] overflow-hidden bg-[#1b1b1b] flex flex-col font-['Open_Sans',sans-serif]">
      <div className="h-px shrink-0 bg-[#555]" />
      <div className="h-[19px] shrink-0 bg-[#e8ebf4] flex items-center gap-[13px] pl-[7px] text-[11.500px] leading-none text-[#5c5c5c]">
        {menu.map((m) => <span key={m}>{m}</span>)}
      </div>
      <div className="h-px shrink-0 bg-white" />
      <Toolbar />
      <div className="h-[430px] mt-[1px] shrink-0 flex">
        <ProjectPanel />
        <CompPanel />
        <RightPanels />
      </div>
      <div className="h-[5px] shrink-0" />
      <Timeline />
    </div>
  );
}
